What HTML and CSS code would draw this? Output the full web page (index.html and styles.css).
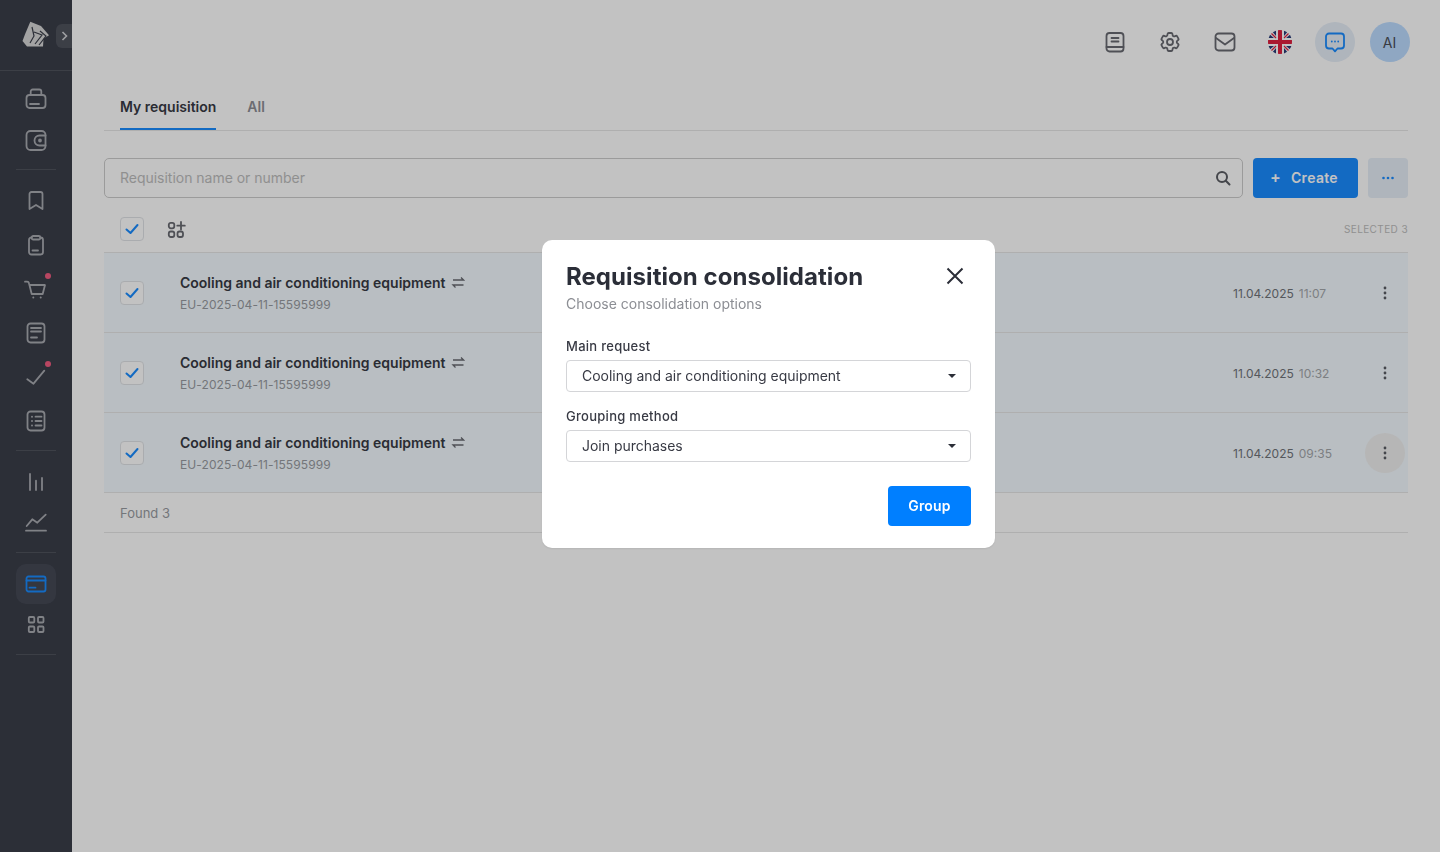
FILE: index.html
```html
<!DOCTYPE html>
<html lang="en">
<head>
<meta charset="utf-8">
<title>Requisition consolidation</title>
<link rel="stylesheet" href="styles.css">
</head>
<body>
<div class="app">
  <aside class="sidebar">
    <div class="brand">
      <svg class="logo" width="28" height="26" viewBox="0 0 28 26"><path class="logo-fill" d="M8.300 .7L19 5l8 9.300-5.500 3.500L21 25.500 5 25.500 0.500 20 3 13.300z"/><path class="logo-cut" d="M10 6L12 15 8 22M12 11L20 14 13 23M18 10L24 15 17 24"/></svg>
      <button class="expand"><svg width="16" height="24" viewBox="0 0 16 24"><path d="M6.500 8 L10.500 12 L6.500 16" class="chev"/></svg></button>
    </div>
    <nav class="group group-a">
      <a class="item short"><svg class="ic" viewBox="0 0 24 24"><rect x="2.500" y="8" width="19" height="13" rx="3"/><path d="M6.700 8V4.500a2 2 0 0 1 2-2h6.600a2 2 0 0 1 2 2V8M6 17h9"/></svg></a>
      <a class="item short"><svg class="ic" viewBox="0 0 24 24"><rect x="2.500" y="3" width="19" height="19" rx="4"/><path d="M21.500 7.500H15.500a5 5 0 0 0 0 10h6"/><circle cx="16" cy="12.500" r="1"/></svg></a>
    </nav>
    <nav class="group group-b">
      <a class="item"><svg class="ic" viewBox="0 0 24 24"><path d="M5.500 5a2 2 0 0 1 2-2h9a2 2 0 0 1 2 2v15l-6.500-4-6.500 4z"/></svg></a>
      <a class="item"><svg class="ic" viewBox="0 0 24 24"><path d="M7.700 4.500H7.500a2.500 2.500 0 0 0-2.500 2.500v12a2.500 2.500 0 0 0 2.500 2.500h9a2.500 2.500 0 0 0 2.500-2.500V7a2.500 2.500 0 0 0-2.500-2.500h-.2"/><rect x="7.700" y="3" width="8.600" height="3.500" rx="1.500"/><path d="M8.500 17.500h5.500"/></svg></a>
      <a class="item"><svg class="ic" viewBox="0 0 24 24"><path d="M1 4.700h2a2 2 0 0 1 2 1.600L7.700 17h11L21 8H5.500"/><circle class="solid" cx="9.300" cy="20.500" r="1"/><circle class="solid" cx="16.700" cy="20.500" r="1"/></svg><span class="dot"></span></a>
      <a class="item"><svg class="ic" viewBox="0 0 24 24"><rect x="3.500" y="2.500" width="17" height="19" rx="3"/><path d="M7 7h10M7 10.500h10M7 16.500h6"/></svg></a>
      <a class="item"><svg class="ic" viewBox="0 0 24 24"><path d="M3.300 14.300l6.200 4.400L20.300 5.700"/></svg><span class="dot"></span></a>
      <a class="item"><svg class="ic" viewBox="0 0 24 24"><rect x="3.500" y="2.500" width="17" height="19" rx="3"/><path d="M11.500 7.700h6M11.500 12h6M11.500 16.500h6"/><circle class="solid" cx="8" cy="7.700" r="1"/><circle class="solid" cx="8" cy="12" r="1"/><circle class="solid" cx="8" cy="16.500" r="1"/></svg></a>
    </nav>
    <nav class="group group-c">
      <a class="item short"><svg class="ic" viewBox="0 0 24 24"><path d="M6 4v16M12 10.700V20M18 8v12"/></svg></a>
      <a class="item short"><svg class="ic" viewBox="0 0 24 24"><path d="M2.700 15l5.600-6.700 5 3.400 8.400-8M2 19.700h20"/></svg></a>
    </nav>
    <nav class="group group-d">
      <a class="item active"><svg class="ic" viewBox="0 0 24 24"><rect x="2.500" y="4.500" width="19" height="15" rx="2"/><path d="M2.500 8.500h19M5.500 15.700h6"/></svg></a>
      <a class="item plain"><svg class="ic" viewBox="0 0 24 24"><rect x="4.800" y="5" width="5.500" height="5.500" rx="1"/><rect x="14" y="5" width="5.500" height="5.500" rx="1"/><rect x="4.800" y="14.500" width="5.500" height="5.500" rx="1"/><rect x="14" y="14.500" width="5.500" height="5.500" rx="1"/></svg></a>
    </nav>
  </aside>

  <main class="main">
    <header class="topbar">
      <button class="round"><svg class="ic dark" viewBox="0 0 24 24"><rect x="3.500" y="3" width="17" height="18.500" rx="3"/><path d="M8.500 8h7M8.500 11.500h7M3.500 17h17"/></svg></button>
      <button class="round"><svg class="ic dark" viewBox="0 0 24 24"><path d="M9.594 3.940c.09-.542.56-.94 1.110-.94h2.593c.55 0 1.020.398 1.110.94l.213 1.281c.063.374.313.686.645.87.074.04.147.083.22.127.325.196.72.257 1.075.124l1.217-.456a1.125 1.125 0 0 1 1.370.49l1.296 2.247a1.125 1.125 0 0 1-.26 1.431l-1.003.827c-.293.241-.438.613-.43.992a7.723 7.723 0 0 1 0 .255c-.008.378.137.75.43.991l1.004.827c.424.35.534.955.26 1.430l-1.298 2.247a1.125 1.125 0 0 1-1.369.491l-1.217-.456c-.355-.133-.75-.072-1.076.124a6.470 6.470 0 0 1-.22.128c-.331.183-.581.495-.644.869l-.213 1.281c-.09.543-.56.94-1.110.94h-2.594c-.55 0-1.019-.398-1.110-.94l-.213-1.281c-.062-.374-.312-.686-.644-.87a6.520 6.520 0 0 1-.22-.127c-.325-.196-.72-.257-1.076-.124l-1.217.456a1.125 1.125 0 0 1-1.369-.49l-1.297-2.247a1.125 1.125 0 0 1 .26-1.431l1.004-.827c.292-.24.437-.613.43-.991a6.932 6.932 0 0 1 0-.255c.007-.38-.138-.751-.43-.992l-1.004-.827a1.125 1.125 0 0 1-.26-1.430l1.297-2.247a1.125 1.125 0 0 1 1.370-.491l1.216.456c.356.133.751.072 1.076-.124.072-.044.146-.086.22-.128.332-.183.582-.495.644-.869l.214-1.280Z"/><circle cx="12" cy="12" r="3"/></svg></button>
      <button class="round"><svg class="ic dark" viewBox="0 0 24 24"><rect x="2.500" y="3.500" width="19" height="17" rx="3"/><path d="M3 8l9 6.500L21 8"/></svg></button>
      <button class="round"><svg class="flag" width="24" height="24" viewBox="0 0 24 24"><defs><clipPath id="flagclip"><circle cx="12" cy="12" r="12"/></clipPath></defs><g clip-path="url(#flagclip)"><rect width="24" height="24" fill="#fff"/><path fill="#2a3c78" d="M8 0v6L3 0zM0 8h6L0 3zM16 0v6l5-6zM24 8h-6l6-5zM8 24v-6l-5 6zM0 16h6l-6 5zM16 24v-6l5 6zM24 16h-6l6 5z"/><path stroke="#e0203f" stroke-width="1.200" d="M3 3l5 5M21 3l-5 5M3 21l5-5M21 21l-5-5"/><path fill="#e0203f" d="M10 0h4v10H24v4H14V24h-4V14H0v-4h10z"/></g></svg></button>
      <button class="round tint"><svg class="ic blue" viewBox="0 0 24 24"><path d="M6 3.500h12a3 3 0 0 1 3 3v9a3 3 0 0 1-3 3h-3.500L12 21.300l-2.500-2.800H6a3 3 0 0 1-3-3v-9a3 3 0 0 1 3-3z"/><circle class="solid-blue" cx="8.800" cy="11.500" r=".9"/><circle class="solid-blue" cx="12" cy="11.500" r=".9"/><circle class="solid-blue" cx="15.200" cy="11.500" r=".9"/></svg></button>
      <button class="round avatar">AI</button>
    </header>

    <section class="content">
      <div class="tabs">
        <a class="tab current">My requisition</a>
        <a class="tab">All</a>
      </div>

      <div class="searchbar">
        <label class="search">
          <span class="placeholder">Requisition name or number</span>
          <svg class="search-ic" width="16" height="16" viewBox="0 0 16 16"><circle cx="7" cy="7" r="5"/><path d="M10.800 10.800L14.500 14.500"/></svg>
        </label>
        <button class="create"><span class="plus">+</span>Create</button>
        <button class="more"><svg width="14" height="4" viewBox="0 0 14 4"><circle cx="2.500" cy="2" r="1.300"/><circle cx="7" cy="2" r="1.300"/><circle cx="11.500" cy="2" r="1.300"/></svg></button>
      </div>

      <div class="listhead">
        <span class="check"><svg width="24" height="24" viewBox="0 0 24 24"><path d="M6.500 12.500l4 3.500 7-8"/></svg></span>
        <svg class="ic dark group-ic" viewBox="0 0 24 24"><rect x="4.800" y="5.800" width="5.500" height="5.500" rx="2"/><rect x="4.800" y="14.500" width="5.500" height="5.500" rx="2"/><rect x="13.500" y="14.500" width="5.500" height="5.500" rx="2"/><path d="M13.300 8.700h7.500M17 5v7.500"/></svg>
        <span class="selected">SELECTED 3</span>
      </div>

      <div class="row">
        <span class="check"><svg width="24" height="24" viewBox="0 0 24 24"><path d="M6.500 12.500l4 3.500 7-8"/></svg></span>
        <div class="info">
          <div class="title">Cooling and air conditioning equipment<svg class="swap" width="14" height="14" viewBox="0 0 14 14"><path d="M2 5H12.500L10 2.500M12.500 10H2L4.500 12.500"/></svg></div>
          <div class="code">EU-2025-04-11-15595999</div>
        </div>
        <div class="when"><span class="date">11.04.2025</span><span class="time">11:07</span></div>
        <button class="menu"><svg width="4" height="14" viewBox="0 0 4 14"><circle cx="2" cy="2" r="1.400"/><circle cx="2" cy="7" r="1.400"/><circle cx="2" cy="12" r="1.400"/></svg></button>
      </div>
      <div class="row">
        <span class="check"><svg width="24" height="24" viewBox="0 0 24 24"><path d="M6.500 12.500l4 3.500 7-8"/></svg></span>
        <div class="info">
          <div class="title">Cooling and air conditioning equipment<svg class="swap" width="14" height="14" viewBox="0 0 14 14"><path d="M2 5H12.500L10 2.500M12.500 10H2L4.500 12.500"/></svg></div>
          <div class="code">EU-2025-04-11-15595999</div>
        </div>
        <div class="when"><span class="date">11.04.2025</span><span class="time">10:32</span></div>
        <button class="menu"><svg width="4" height="14" viewBox="0 0 4 14"><circle cx="2" cy="2" r="1.400"/><circle cx="2" cy="7" r="1.400"/><circle cx="2" cy="12" r="1.400"/></svg></button>
      </div>
      <div class="row">
        <span class="check"><svg width="24" height="24" viewBox="0 0 24 24"><path d="M6.500 12.500l4 3.500 7-8"/></svg></span>
        <div class="info">
          <div class="title">Cooling and air conditioning equipment<svg class="swap" width="14" height="14" viewBox="0 0 14 14"><path d="M2 5H12.500L10 2.500M12.500 10H2L4.500 12.500"/></svg></div>
          <div class="code">EU-2025-04-11-15595999</div>
        </div>
        <div class="when"><span class="date">11.04.2025</span><span class="time">09:35</span></div>
        <button class="menu hover"><svg width="4" height="14" viewBox="0 0 4 14"><circle cx="2" cy="2" r="1.400"/><circle cx="2" cy="7" r="1.400"/><circle cx="2" cy="12" r="1.400"/></svg></button>
      </div>
      <div class="found">Found 3</div>
    </section>
  </main>
</div>

<div class="overlay">
  <div class="modal">
    <div class="modal-head">
      <h2 class="modal-title">Requisition consolidation</h2>
      <button class="close"><svg width="32" height="32" viewBox="0 0 32 32"><path d="M8.500 8.500l15 15M23.500 8.500l-15 15"/></svg></button>
    </div>
    <p class="modal-sub">Choose consolidation options</p>
    <div class="field">
      <div class="field-label">Main request</div>
      <div class="select"><span>Cooling and air conditioning equipment</span><i class="caret"></i></div>
    </div>
    <div class="field">
      <div class="field-label">Grouping method</div>
      <div class="select"><span>Join purchases</span><i class="caret"></i></div>
    </div>
    <div class="modal-foot"><button class="primary">Group</button></div>
  </div>
</div>
</body>
</html>
```
FILE: styles.css
```css
* { box-sizing: border-box; }
html, body { margin: 0; height: 100%; }
body {
  font-family: Inter, "Liberation Sans", sans-serif;
  background: #fff;
  color: #383a44;
  overflow: hidden;
}
button { font: inherit; border: 0; background: none; padding: 0; color: inherit; }

.app { display: flex; height: 852px; }

/* sidebar */
.sidebar { width: 72px; flex: none; background: #3a3e49; display: flex; flex-direction: column; }
.brand { height: 71px; border-bottom: 1px solid #50535d; display: flex; align-items: flex-start; position: relative; padding: 21px 0 0 22px; }
.logo-fill { fill: #d6d6d6; }
.logo-cut { fill: none; stroke: #3a3e49; stroke-width: 1.200; }
.expand { position: absolute; left: 56px; top: 24px; width: 16px; height: 24px; background: #50535d; border-radius: 6px 0 0 6px; display: flex; }
.chev { fill: none; stroke: #d2d3d6; stroke-width: 1.600; }
.group { margin: 0 16px; border-bottom: 1px solid #50535d; display: flex; flex-direction: column; align-items: center; }
.group-a { height: 99px; padding-top: 7px; }
.group-b { height: 281px; padding-top: 9px; }
.group-c { height: 102px; padding-top: 10px; }
.group-d { height: 102px; padding-top: 11px; }
.item { width: 40px; height: 44px; display: flex; align-items: center; justify-content: center; position: relative; }
.item.short { height: 41px; }
.item.active { height: 40px; background: #454955; border-radius: 10px; }
.item.plain { height: 40px; }
.ic { width: 24px; height: 24px; fill: none; stroke: #a9abb1; stroke-width: 1.800; stroke-linecap: round; stroke-linejoin: round; flex: none; }
.ic .solid { fill: #a9abb1; stroke: none; }
.item.active .ic { stroke: #1a8cff; }
.dot { position: absolute; left: 29px; top: 6px; width: 6px; height: 6px; border-radius: 50%; background: #f25c80; }

/* main */
.main { flex: 1; min-width: 0; background: #fff; }
.topbar { display: flex; justify-content: flex-end; gap: 15px; padding: 22px 30px 0; }
.round { width: 40px; height: 40px; border-radius: 50%; display: flex; align-items: center; justify-content: center; font-size: 14px; }
.ic.dark { stroke: #686a71; }
.ic.blue { stroke: #1a8cff; }
.ic .solid-blue { fill: #1a8cff; stroke: none; }
.tint { background: #e6eef8; }
.avatar { background: #bcdcff; color: #4b4e57; font-weight: 400; padding-right: 1px; }

.content { padding: 0 32px; }
.tabs { margin-top: 20px; height: 49px; border-bottom: 1px solid #e6e6e6; display: flex; gap: 31px; padding-left: 16px; }
.tab { height: 48px; display: flex; align-items: center; font-size: 14px; font-weight: 600; color: #8e8f96; }
.tab.current { color: #383a44; box-shadow: inset 0 -2px 0 #1a8cff; }

.searchbar { margin-top: 27px; display: flex; gap: 10px; }
.search { flex: 1; height: 40px; border: 1px solid #ccc; border-radius: 5px; display: flex; align-items: center; justify-content: space-between; padding: 0 11px 0 15px; }
.placeholder { font-size: 14px; color: #bdbdbd; margin-bottom: 1px; letter-spacing: -.02px; }
.search-ic { fill: none; stroke: #5a5c63; stroke-width: 2; stroke-linecap: round; }
.create { width: 105px; height: 40px; background: #1a8cff; color: #fff; border-radius: 4px; font-size: 14px; font-weight: 600; letter-spacing: .3px; display: flex; align-items: center; padding: 0 0 1px 17px; text-align: left; }
.plus { width: 21px; font-size: 16px; line-height: 18px; font-weight: 600; margin-bottom: 2px; }
.more { width: 40px; height: 40px; background: #e6eef8; border-radius: 4px; display: flex; align-items: center; justify-content: center; }
.more svg { fill: #1a8cff; }

.listhead { height: 55px; padding: 8px 0 0 16px; border-bottom: 1px solid #e6e6e6; display: flex; align-items: center; }
.check { width: 24px; height: 24px; flex: none; background: #fff; border: 1px solid #e0e3e6; border-radius: 4px; display: block; }
.check svg { display: block; margin: -1px; fill: none; stroke: #1a8cff; stroke-width: 2; stroke-linecap: round; stroke-linejoin: round; }
.group-ic { margin-left: 20px; }
.selected { margin-left: auto; font-size: 10px; letter-spacing: .4px; color: #bdbdbd; }

.row { height: 80px; background: #f3faff; border-bottom: 1px solid #e6e6e6; display: flex; align-items: center; padding: 0 3px 0 16px; }
.info { margin-left: 36px; flex: 1; }
.title { font-size: 14px; font-weight: 600; line-height: 20px; color: #383a44; display: flex; align-items: center; }
.swap { margin: 0 0 2px 6px; fill: none; stroke: #686a71; stroke-width: 1.300; }
.code { margin-top: 4px; margin-bottom: -1px; font-size: 12px; line-height: 16px; color: #989ba1; letter-spacing: .08px; }
.when { width: 132px; font-size: 12px; line-height: 18px; padding-top: 2px; color: #70747a; }
.time { margin-left: 5px; color: #a4a7ab; }
.menu { width: 40px; height: 40px; border-radius: 50%; display: flex; align-items: center; justify-content: center; }
.menu svg { fill: #5a5c63; }
.menu.hover { background: #f0f0f0; }
.found { height: 40px; border-bottom: 1px solid #e6e6e6; padding-left: 16px; display: flex; align-items: center; font-size: 13px; color: #989ba1; }

/* modal */
.overlay { position: fixed; inset: 0; background: rgba(0, 0, 0, .24); padding: 240px 0 0 542px; }
.modal { width: 453px; height: 308px; background: #fff; border-radius: 10px; padding: 20px 24px 22px; box-shadow: 0 1px 2px rgba(0,0,0,.08); }
.modal-head { display: flex; justify-content: space-between; align-items: center; height: 32px; }
.modal-title { margin: 0; padding-top: 1px; font-size: 24px; line-height: 32px; font-weight: 700; letter-spacing: .05px; color: #2b2e38; }
.close { width: 32px; height: 32px; }
.close svg { display: block; fill: none; stroke: #2b2e38; stroke-width: 2; }
.modal-sub { margin: 2px 0 22px; font-size: 14px; line-height: 20px; color: #8c8e94; }
.field { margin-bottom: 14px; }
.field-label { font-size: 13px; line-height: 20px; font-weight: 500; color: #383a44; letter-spacing: .28px; margin-bottom: 4px; }
.select { height: 32px; border: 1px solid #d4d5d8; border-radius: 4px; display: flex; align-items: center; justify-content: space-between; padding: 0 14px 1px 15px; font-size: 14px; letter-spacing: -.02px; color: #383a44; }
.caret { width: 0; height: 0; margin-top: 1px; border-left: 4px solid transparent; border-right: 4px solid transparent; border-top: 4px solid #2b2e38; }
.modal-foot { display: flex; justify-content: flex-end; margin-top: 24px; }
.primary { width: 83px; height: 40px; background: #007fff; color: #fff; border-radius: 4px; font-size: 14px; font-weight: 600; letter-spacing: .2px; padding-bottom: 1px; }
```
